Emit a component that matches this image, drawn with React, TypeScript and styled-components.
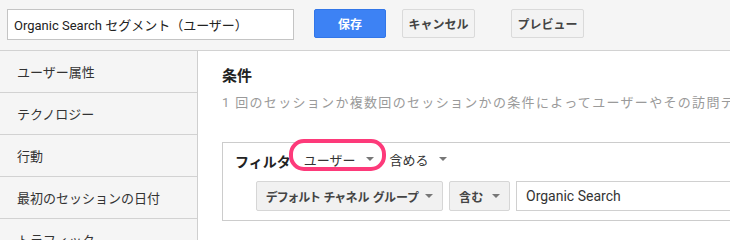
import React from "react";
import styled, { createGlobalStyle } from "styled-components";

const Global = createGlobalStyle`
  html, body { margin: 0; padding: 0; background: #fff; overflow: hidden; }
  body { font-family: Roboto, "Noto Sans CJK JP", sans-serif; color: #333; }
  * { box-sizing: border-box; }
`;

const Page = styled.div`
  width: 730px;
  height: 240px;
  overflow: hidden;
  display: flex;
  flex-direction: column;
`;

const Header = styled.div`
  height: 51px;
  flex: none;
  background: #f5f5f5;
  border-bottom: 1px solid #d2d2d2;
  display: flex;
  align-items: flex-start;
  padding: 9px 0 0 7px;
`;

const NameInput = styled.div`
  width: 287px;
  height: 31px;
  background: #fff;
  border: 1px solid #c4c4c4;
  display: flex;
  align-items: center;
  padding-left: 6px;
  font-size: 13px;
  color: #222;
  white-space: nowrap;
`;

const Button = styled.div<{ $primary?: boolean; $ml: number }>`
  margin-left: ${(p) => p.$ml}px;
  width: ${(p) => (p.$primary ? 72 : 73)}px;
  height: 29px;
  border-radius: 2px;
  display: flex;
  align-items: center;
  justify-content: center;
  font-size: 12px;
  font-weight: bold;
  background: ${(p) => (p.$primary ? "#3d82f4" : "#f3f3f3")};
  border: 1px solid ${(p) => (p.$primary ? "#3276e8" : "#dadada")};
  color: ${(p) => (p.$primary ? "#fff" : "#444")};
`;

const Body = styled.div`
  flex: 1;
  display: flex;
  min-height: 0;
`;

const Sidebar = styled.div`
  width: 198px;
  flex: none;
  background: #f5f5f5;
  border-right: 1px solid #cfcfcf;
`;

const NavItem = styled.div`
  height: 42px;
  border-bottom: 1px solid #d2d2d2;
  display: flex;
  align-items: center;
  padding-left: 17px;
  font-size: 13px;
  color: #333;
`;

const Main = styled.div`
  flex: 1;
  padding: 16px 0 0 24px;
  overflow: hidden;
  position: relative;
`;

const Title = styled.div`
  font-size: 15px;
  font-weight: bold;
  color: #222;
  line-height: 18px;
`;

const Desc = styled.div`
  margin-top: 10px;
  font-size: 13px;
  color: #9a9a9a;
  white-space: nowrap;
  letter-spacing: 1.32px;
  line-height: 16px;
`;

const FilterBox = styled.div`
  margin-top: 31px;
  width: 620px;
  height: 79px;
  border: 1px solid #cccccc;
  position: relative;
  padding: 6px 0 0 12px;
`;

const FilterRow = styled.div`
  display: flex;
  align-items: center;
  height: 20px;
`;

const FilterLabel = styled.span`
  font-size: 14px;
  font-weight: bold;
  color: #222;
  margin-top: 3px;
`;

const Select = styled.span<{ $ml: number; $gap: number }>`
  margin-left: ${(p) => p.$ml}px;
  display: inline-flex;
  align-items: center;
  gap: ${(p) => p.$gap}px;
  font-size: 13px;
  color: #333;
`;

const Caret = styled.span`
  width: 0;
  height: 0;
  border-left: 4px solid transparent;
  border-right: 4px solid transparent;
  border-top: 4px solid #777;
  display: inline-block;
  flex: none;
`;

const Ring = styled.div`
  position: absolute;
  left: 66px;
  top: -4px;
  width: 97px;
  height: 32px;
  border: 4px solid #fd3a7a;
  border-radius: 15px;
`;

const CondRow = styled.div`
  display: flex;
  margin-top: 12px;
  margin-left: 21px;
  gap: 6px;
  height: 30px;
`;

const DropBox = styled.div<{ $w: number }>`
  width: ${(p) => p.$w}px;
  flex: none;
  height: 30px;
  background: #f1f1f1;
  border: 1px solid #d6d6d6;
  border-radius: 2px;
  display: flex;
  align-items: center;
  justify-content: space-between;
  padding: 0 9px 0 9px;
  font-size: 12px;
  font-weight: bold;
  font-feature-settings: "palt";
  letter-spacing: 0.2px;
  color: #444;
  white-space: nowrap;
`;

const ValueInput = styled.div`
  flex: 1;
  height: 30px;
  background: #fff;
  border: 1px solid #d0d0d0;
  display: flex;
  align-items: center;
  padding-left: 9px;
  font-size: 14px;
  color: #333;
`;

export default function App() {
  return (
    <Page>
      <Global />
      <Header>
        <NameInput>Organic Search セグメント（ユーザー）</NameInput>
        <Button $primary $ml={20}>保存</Button>
        <Button $ml={16}>キャンセル</Button>
        <Button $ml={36}>プレビュー</Button>
      </Header>
      <Body>
        <Sidebar>
          <NavItem>ユーザー属性</NavItem>
          <NavItem>テクノロジー</NavItem>
          <NavItem>行動</NavItem>
          <NavItem>最初のセッションの日付</NavItem>
          <NavItem>トラフィック</NavItem>
        </Sidebar>
        <Main>
          <Title>条件</Title>
          <Desc>1 回のセッションか複数回のセッションかの条件によってユーザーやその訪問データを絞り込みます。</Desc>
          <FilterBox>
            <FilterRow>
              <FilterLabel>フィルタ</FilterLabel>
              <Select $ml={13} $gap={11}>ユーザー<Caret /></Select>
              <Select $ml={15} $gap={10}>含める<Caret /></Select>
            </FilterRow>
            <Ring />
            <CondRow>
              <DropBox $w={187}>デフォルト チャネル グループ<Caret /></DropBox>
              <DropBox $w={61}>含む<Caret /></DropBox>
              <ValueInput>Organic Search</ValueInput>
            </CondRow>
          </FilterBox>
        </Main>
      </Body>
    </Page>
  );
}
